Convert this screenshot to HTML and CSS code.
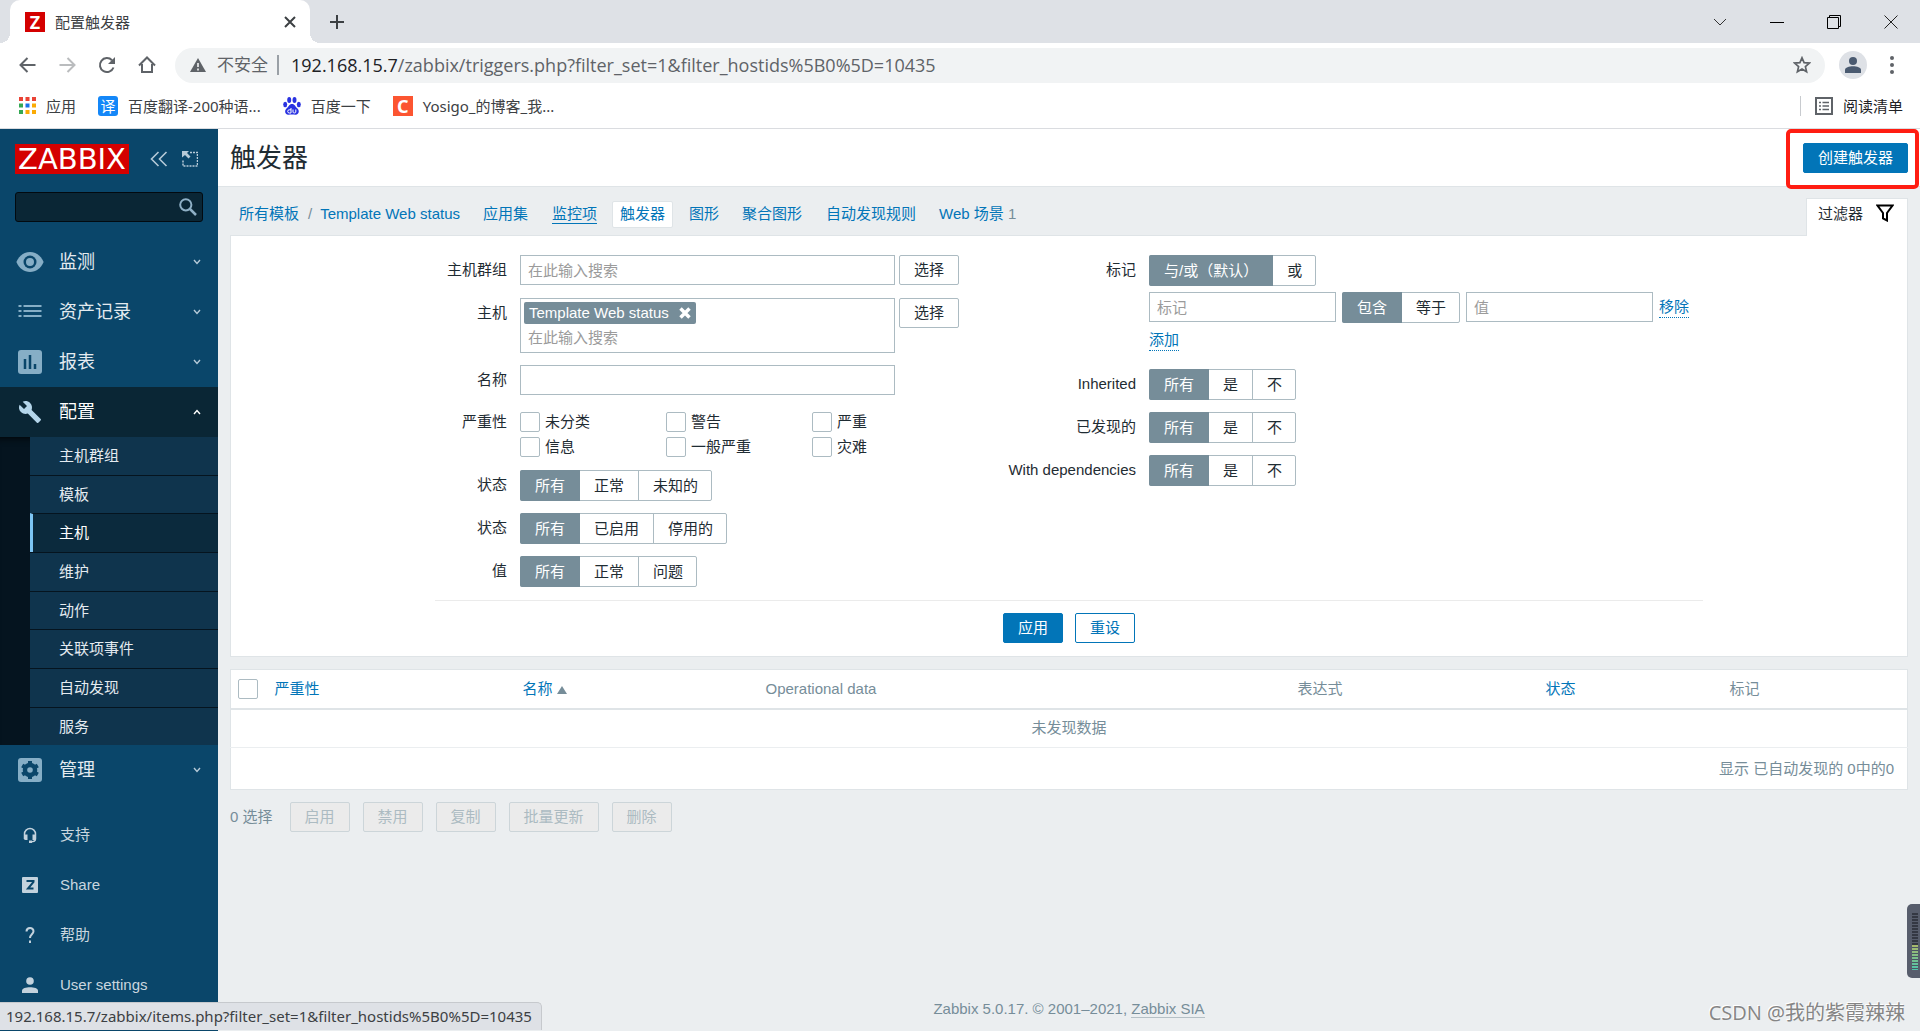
FILE: index.html
```html
<!DOCTYPE html>
<html lang="zh-CN">
<head>
<meta charset="utf-8">
<title>配置触发器</title>
<link rel="stylesheet" href="styles.css">
</head>
<body>
<div class="browser">
  <div class="tabstrip">
    <div class="tab">
      <span class="favicon favicon-zabbix">Z</span>
      <span class="tab-title">配置触发器</span>
      <button class="icon-btn" aria-label="关闭标签页"><svg width="12" height="12" viewBox="0 0 12 12"><path d="M1 1l10 10M11 1L1 11" stroke="#3c4043" stroke-width="2"/></svg></button>
    </div>
    <button class="icon-btn new-tab" aria-label="新标签页"><svg width="16" height="16" viewBox="0 0 16 16"><path d="M8 1v14M1 8h14" stroke="#3c4043" stroke-width="2"/></svg></button>
    <div class="window-controls">
      <button class="icon-btn" aria-label="搜索标签页"><svg width="14" height="8" viewBox="0 0 14 8"><path d="M1 1l6 6 6-6" fill="none" stroke="#333"/></svg></button>
      <button class="icon-btn" aria-label="最小化"><svg width="14" height="14" viewBox="0 0 14 14"><path d="M0 7.500h14" stroke="#000"/></svg></button>
      <button class="icon-btn" aria-label="还原"><svg width="14" height="14" viewBox="0 0 14 14"><path d="M.5 2.500h11v11H.5zM2.500 2V.5h11v11H12" fill="none" stroke="#000"/></svg></button>
      <button class="icon-btn" aria-label="关闭"><svg width="14" height="14" viewBox="0 0 14 14"><path d="M.5.5l13 13M13.500.5l-13 13" stroke="#222"/></svg></button>
    </div>
  </div>
  <div class="toolbar">
    <div class="nav-buttons">
      <button class="icon-btn" aria-label="后退"><svg width="17" height="16" viewBox="0 0 17 16"><path d="M16.500 8H2M8.500 1L1.500 8l7 7" fill="none" stroke="#5f6368" stroke-width="2"/></svg></button>
      <button class="icon-btn" aria-label="前进"><svg width="17" height="16" viewBox="0 0 17 16"><path d="M.5 8H15M8.500 1l7 7-7 7" fill="none" stroke="#babcbe" stroke-width="2"/></svg></button>
      <button class="icon-btn" aria-label="刷新"><svg width="18" height="18" viewBox="0 0 18 18"><path d="M15.500 11.500A7 7 0 1 1 14 4.200" fill="none" stroke="#5f6368" stroke-width="2"/><path d="M17 1v7h-7z" fill="#5f6368"/></svg></button>
      <button class="icon-btn" aria-label="主页"><svg width="18" height="18" viewBox="0 0 18 18"><path d="M4 8v8h10V8M1 9.500L9 1.500l8 8" fill="none" stroke="#5f6368" stroke-width="2"/></svg></button>
    </div>
    <div class="omnibox">
      <svg width="16" height="14" viewBox="0 0 16 14"><path d="M8 0l8 14H0z" fill="#5f6368"/><path d="M8 5v4M8 10.500v2" stroke="#fff" stroke-width="1.500"/></svg>
      <span class="insecure">不安全</span>
      <span class="url"><b>192.168.15.7</b>/zabbix/triggers.php?filter_set=1&amp;filter_hostids%5B0%5D=10435</span>
      <button class="icon-btn star" aria-label="收藏"><svg width="18" height="18" viewBox="0 0 18 18"><path d="M9 1.800l2.100 4.900 5.300.4-4 3.500 1.200 5.200L9 13l-4.600 2.800 1.200-5.200-4-3.500 5.300-.4z" fill="none" stroke="#5f6368" stroke-width="1.700"/></svg></button>
    </div>
    <button class="icon-btn avatar" aria-label="用户"><svg width="16" height="16" viewBox="0 0 16 16" fill="#4a5a70"><circle cx="8" cy="4" r="4"/><path d="M0 16v-3c0-5 16-5 16 0v3z"/></svg></button>
    <button class="icon-btn kebab" aria-label="菜单"><svg width="4" height="18" viewBox="0 0 4 18" fill="#5f6368"><circle cx="2" cy="2" r="2"/><circle cx="2" cy="9" r="2"/><circle cx="2" cy="16" r="2"/></svg></button>
  </div>
  <div class="bookmarks">
    <a href="#" class="bookmark"><svg width="17" height="17" viewBox="0 0 17 17"><path d="M0 0h4v4H0zM6.500 0h4v4h-4zM13 0h4v4h-4z" fill="#ea4335"/><path d="M0 6.500h4v4H0zM0 13h4v4H0z" fill="#34a853"/><path d="M6.500 6.500h4v4h-4z" fill="#1a73e8"/><path d="M13 6.500h4v4h-4zM6.500 13h4v4h-4zM13 13h4v4h-4z" fill="#fbab04"/></svg>应用</a>
    <a href="#" class="bookmark"><span class="favicon favicon-fanyi">译</span>百度翻译-200种语...</a>
    <a href="#" class="bookmark"><svg width="18" height="18" viewBox="0 0 18 18" fill="#2932e1"><ellipse cx="6.200" cy="3" rx="2" ry="2.900"/><ellipse cx="11.500" cy="3" rx="2" ry="2.900"/><ellipse cx="2.200" cy="7.500" rx="2" ry="2.700"/><ellipse cx="15.800" cy="7.500" rx="2" ry="2.700"/><path d="M9 7c3 0 3 2.500 5.500 4.500 2.500 2.300 1 6.500-2 6.200-2.300-.4-4.700-.4-7 0-3.300.3-4.500-4-2-6.200C6 9.500 6 7 9 7z"/><path d="M8 11v5H6.300a1.300 1.300 0 0 1 0-3.200H8M10 12.500v2.700c0 1 2.800 1 2.800 0v-2.700" fill="none" stroke="#fff"/></svg>百度一下</a>
    <a href="#" class="bookmark"><span class="favicon favicon-csdn">C</span>Yosigo_的博客_我...</a>
    <a href="#" class="bookmark reading"><svg width="18" height="18" viewBox="0 0 18 18"><path d="M1 1h16v16H1z" fill="none" stroke="#5f6368" stroke-width="2"/><path d="M4 5.500h2M4 9h2M4 12.500h2M7.500 5.500H14M7.500 9H14M7.500 12.500H14" stroke="#5f6368" stroke-width="1.500"/></svg>阅读清单</a>
  </div>
</div>

<div class="app">
  <aside class="sidebar">
    <div class="brand">
      <a href="#" class="logo">ZABBIX</a>
      <button class="icon-btn" aria-label="收起"><svg width="18" height="16" viewBox="0 0 18 16"><path d="M8.500 1l-7 7 7 7M16.500 1l-7 7 7 7" fill="none" stroke="#b6cad8" stroke-width="1.600"/></svg></button>
      <button class="icon-btn" aria-label="隐藏"><svg width="16" height="16" viewBox="0 0 16 16"><path d="M8 1.500h7.500v13.500H1V9" fill="none" stroke="#b6cad8" stroke-width="1.500" stroke-dasharray="2 1"/><path d="M0 0h7L5 2l3.500 3.500-2 2L3 4 0 6.500z" fill="#b6cad8"/></svg></button>
    </div>
    <form class="side-search">
      <input type="search" aria-label="搜索">
      <button type="button" class="icon-btn" aria-label="搜索"><svg width="18" height="18" viewBox="0 0 18 18"><circle cx="6.800" cy="6.800" r="5.600" fill="none" stroke="#8fb0c6" stroke-width="2"/><path d="M11 11l6 6" stroke="#8fb0c6" stroke-width="2.500"/></svg></button>
    </form>
    <nav class="menu">
      <a href="#" class="menu-item"><svg width="28" height="20" viewBox="0 0 28 20"><path d="M14 0c6 0 11 3.800 13.600 10C25 16.200 20 20 14 20S3 16.200.4 10C3 3.800 8 0 14 0z" fill="#86aec6"/><circle cx="14" cy="10" r="6.500" fill="#0a466a"/><circle cx="14" cy="10" r="4" fill="#86aec6"/></svg><span>监测</span><svg class="chev" width="8" height="6" viewBox="0 0 8 6"><path d="M1 1l3 3.500L7 1" fill="none" stroke="#b6cad8" stroke-width="1.400"/></svg></a>
      <a href="#" class="menu-item"><svg width="28" height="20" viewBox="0 0 28 20"><path d="M2.500 4h3M2.500 9h3M2.500 14h3M7.500 4h18M7.500 9h18M7.500 14h18" stroke="#86aec6" stroke-width="2.200"/></svg><span>资产记录</span><svg class="chev" width="8" height="6" viewBox="0 0 8 6"><path d="M1 1l3 3.500L7 1" fill="none" stroke="#b6cad8" stroke-width="1.400"/></svg></a>
      <a href="#" class="menu-item"><svg width="28" height="24" viewBox="0 0 28 24"><rect x="2" y="0" width="24" height="24" rx="3" fill="#86aec6"/><path d="M9 9v10M14 5v14M19 14v5" stroke="#0a466a" stroke-width="2.500"/></svg><span>报表</span><svg class="chev" width="8" height="6" viewBox="0 0 8 6"><path d="M1 1l3 3.500L7 1" fill="none" stroke="#b6cad8" stroke-width="1.400"/></svg></a>
      <a href="#" class="menu-item open"><svg width="28" height="24" viewBox="1 0 26 24"><path transform="translate(2 0)" fill="#b4d5ea" d="M22.700 19l-9.100-9.100c.9-2.300.4-5-1.500-6.900-2-2-5-2.400-7.400-1.300L9 6 6 9 1.600 4.700C.4 7.100.9 10.100 2.900 12.100c1.900 1.900 4.600 2.400 6.900 1.500l9.100 9.100c.4.400 1 .4 1.400 0l2.300-2.300c.5-.4.5-1.100.1-1.400z"/></svg><span>配置</span><svg class="chev" width="8" height="6" viewBox="0 0 8 6"><path d="M1 5l3-3.500L7 5" fill="none" stroke="#fff" stroke-width="1.400"/></svg></a>
      <div class="submenu">
        <a href="#">主机群组</a>
        <a href="#">模板</a>
        <a href="#" class="active">主机</a>
        <a href="#">维护</a>
        <a href="#">动作</a>
        <a href="#">关联项事件</a>
        <a href="#">自动发现</a>
        <a href="#">服务</a>
      </div>
      <a href="#" class="menu-item"><svg width="28" height="24" viewBox="0 0 28 24"><rect x="2" y="0" width="24" height="24" rx="3" fill="#86aec6"/><circle cx="14" cy="12" r="5" fill="none" stroke="#0a466a" stroke-width="4.500"/><path d="M14 3v18M6.200 7.500l15.600 9M21.800 7.500l-15.600 9" stroke="#0a466a" stroke-width="4"/><circle cx="14" cy="12" r="2.800" fill="#86aec6"/></svg><span>管理</span><svg class="chev" width="8" height="6" viewBox="0 0 8 6"><path d="M1 1l3 3.500L7 1" fill="none" stroke="#b6cad8" stroke-width="1.400"/></svg></a>
    </nav>
    <nav class="user-menu">
      <a href="#"><svg width="16" height="16" viewBox="0 0 16 16"><path d="M2.500 12V7a5.500 5.500 0 0 1 11 0v5c0 2-2 2.800-5 2.800" fill="none" stroke="#c3d2dd" stroke-width="1.500"/><path d="M2 7.500h3.500V13H3.500C2 13 2 12 2 11zM14 7.500h-3.500V13H14zM7 13.500h3V16H7z" fill="#c3d2dd"/></svg>支持</a>
      <a href="#"><svg width="16" height="16" viewBox="0 0 16 16"><rect width="16" height="16" rx="1" fill="#c3d2dd"/><path d="M4.500 4h7v1L6 11.500h5.500" fill="none" stroke="#0a466a" stroke-width="2"/></svg>Share</a>
      <a href="#"><svg width="16" height="16" viewBox="0 0 16 16"><path d="M4.500 4.500C4.500 0 11.500 0 11.500 4.200 11.500 7 8 7.500 8 11M8 13.500V16" fill="none" stroke="#c3d2dd" stroke-width="2"/></svg>帮助</a>
      <a href="#"><svg width="16" height="16" viewBox="0 0 16 16" fill="#c3d2dd"><circle cx="8" cy="4" r="3.800"/><path d="M0 16v-2.500c0-4.500 16-4.500 16 0V16z"/></svg>User settings</a>
    </nav>
  </aside>

  <main class="content">
    <header class="page-head">
      <h1>触发器</h1>
      <button class="btn primary">创建触发器</button>
    </header>
    <div class="page-nav">
      <nav class="crumbs">
        <a href="#">所有模板</a><span class="sep">/</span><a href="#">Template Web status</a>
        <a href="#" class="nav-link">应用集</a>
        <a href="#" class="nav-link"><span class="hovered">监控项</span></a>
        <a href="#" class="nav-link selected">触发器</a>
        <a href="#" class="nav-link">图形</a>
        <a href="#" class="nav-link">聚合图形</a>
        <a href="#" class="nav-link">自动发现规则</a>
        <a href="#" class="nav-link">Web 场景 <small>1</small></a>
      </nav>
      <a href="#" class="filter-tab">过滤器<svg width="18" height="18" viewBox="0 0 18 18"><path d="M1.500 1.500h15L11 9v7.500L7 14.500V9z" fill="none" stroke="#000" stroke-width="2"/></svg></a>
    </div>

    <form class="filter">
      <div class="filter-cols">
        <div class="fields">
          <label for="groups">主机群组</label>
          <div class="row"><input id="groups" class="text wide" placeholder="在此输入搜索"><button type="button" class="btn plain">选择</button></div>
          <label for="hosts">主机</label>
          <div class="row"><div class="multi wide"><span class="chip">Template Web status<button type="button" class="icon-btn" aria-label="移除"><svg width="12" height="12" viewBox="0 0 12 12"><path d="M1.500 1.500l9 9M10.500 1.500l-9 9" stroke="#fff" stroke-width="3.500"/></svg></button></span><input id="hosts" placeholder="在此输入搜索"></div><button type="button" class="btn plain">选择</button></div>
          <label for="name">名称</label>
          <div class="row"><input id="name" class="text wide"></div>
          <span class="label check-label">严重性</span>
          <div class="checks">
            <label><input type="checkbox">未分类</label><label><input type="checkbox">警告</label><label><input type="checkbox">严重</label>
            <label><input type="checkbox">信息</label><label><input type="checkbox">一般严重</label><label><input type="checkbox">灾难</label>
          </div>
          <span class="label">状态</span>
          <div class="seg"><label><input type="radio" name="state" checked>所有</label><label><input type="radio" name="state">正常</label><label><input type="radio" name="state">未知的</label></div>
          <span class="label">状态</span>
          <div class="seg"><label><input type="radio" name="status" checked>所有</label><label><input type="radio" name="status">已启用</label><label><input type="radio" name="status">停用的</label></div>
          <span class="label">值</span>
          <div class="seg"><label><input type="radio" name="value" checked>所有</label><label><input type="radio" name="value">正常</label><label><input type="radio" name="value">问题</label></div>
        </div>
        <div class="fields">
          <span class="label">标记</span>
          <div class="tags">
            <div class="seg"><label><input type="radio" name="evaltype" checked>与/或（默认）</label><label><input type="radio" name="evaltype">或</label></div>
            <div class="tag-row">
              <input class="text tag" placeholder="标记" aria-label="标记">
              <div class="seg"><label><input type="radio" name="op" checked>包含</label><label><input type="radio" name="op">等于</label></div>
              <input class="text tag" placeholder="值" aria-label="值">
              <button type="button" class="dotted">移除</button>
            </div>
            <button type="button" class="dotted">添加</button>
          </div>
          <span class="label">Inherited</span>
          <div class="seg"><label><input type="radio" name="inherited" checked>所有</label><label><input type="radio" name="inherited">是</label><label><input type="radio" name="inherited">不</label></div>
          <span class="label">已发现的</span>
          <div class="seg"><label><input type="radio" name="discovered" checked>所有</label><label><input type="radio" name="discovered">是</label><label><input type="radio" name="discovered">不</label></div>
          <span class="label">With dependencies</span>
          <div class="seg"><label><input type="radio" name="deps" checked>所有</label><label><input type="radio" name="deps">是</label><label><input type="radio" name="deps">不</label></div>
        </div>
      </div>
      <div class="filter-actions"><button type="button" class="btn primary">应用</button><button type="button" class="btn outline">重设</button></div>
    </form>

    <table class="list">
      <colgroup><col class="c-check"><col class="c-sev"><col class="c-name"><col class="c-data"><col class="c-expr"><col class="c-stat"><col></colgroup>
      <thead><tr><th><input type="checkbox" aria-label="全选"></th><th><a href="#">严重性</a></th><th><a href="#">名称 <i class="asc"></i></a></th><th>Operational data</th><th>表达式</th><th><a href="#">状态</a></th><th>标记</th></tr></thead>
      <tbody><tr><td colspan="7" class="empty">未发现数据</td></tr></tbody>
      <tfoot><tr><td colspan="7" class="count">显示 已自动发现的 0中的0</td></tr></tfoot>
    </table>
    <div class="bulk">
      <span>0 选择</span>
      <button class="btn" disabled>启用</button><button class="btn" disabled>禁用</button><button class="btn" disabled>复制</button><button class="btn" disabled>批量更新</button><button class="btn" disabled>删除</button>
    </div>
    <footer class="foot">Zabbix 5.0.17. © 2001–2021, <a href="#">Zabbix SIA</a></footer>
  </main>
</div>

<div class="highlight"></div>
<div class="meter"><i></i><b></b></div>
<div class="watermark">CSDN @我的紫霞辣辣</div>
<div class="status-url">192.168.15.7/zabbix/items.php?filter_set=1&amp;filter_hostids%5B0%5D=10435</div>
</body>
</html>
```

FILE: styles.css
```css
* { box-sizing: border-box; }
html, body { height: 100%; }
body {
  margin: 0;
  display: flex;
  flex-direction: column;
  overflow: hidden;
  background: #ebeef0;
  color: #1f2c33;
  font: 15px/20px "Liberation Sans", Arial, "Noto Sans CJK SC", sans-serif;
}
a { color: #0275b8; text-decoration: none; }
button, input { font: inherit; color: inherit; }
svg { flex: none; display: block; }
.icon-btn { display: flex; align-items: center; justify-content: center; padding: 0; border: 0; background: none; }

/* Browser frame */
.browser { flex: none; background: #fff; border-bottom: 1px solid #dadce0; color: #3c4043; font-family: "Noto Sans", "Noto Sans CJK SC", sans-serif; }
.tabstrip { display: flex; align-items: center; height: 43px; padding-left: 10px; background: #dee1e6; }
.tab { position: relative; display: flex; align-items: center; width: 300px; height: 43px; padding: 0 14px 8px 15px; border-radius: 10px 10px 0 0; background: #fff; }
.tab::before, .tab::after { content: ""; position: absolute; bottom: 0; width: 10px; height: 10px; }
.tab::before { right: 100%; background: radial-gradient(circle at 0 0, #dee1e6 10px, #fff 10px); }
.tab::after { left: 100%; background: radial-gradient(circle at 100% 0, #dee1e6 10px, #fff 10px); }
.tab { padding-bottom: 0; }
.tab-title { flex: 1; margin-left: 10px; }
.favicon { display: flex; align-items: center; justify-content: center; width: 20px; height: 20px; color: #fff; }
.favicon-zabbix { background: #d40000; font-weight: 700; font-size: 18px; }
.favicon-fanyi { border-radius: 3px; background: #1487f8; font-size: 15px; }
.favicon-csdn { background: #fc5531; font-size: 18px; font-weight: 700; }
.new-tab { margin-left: 19px; }
.window-controls { display: flex; margin-left: auto; padding-right: 1px; }
.window-controls .icon-btn { width: 57px; height: 37px; }
.toolbar { display: flex; align-items: center; height: 44px; padding: 0 10px 0 7px; }
.nav-buttons { display: flex; width: 168px; }
.nav-buttons .icon-btn { width: 40px; height: 36px; }
.omnibox { flex: 1; display: flex; align-items: center; height: 35px; padding: 0 14px 0 15px; border-radius: 18px; background: #f1f3f4; font-size: 17px; color: #5f6368; }
.insecure { margin: 0 12px 0 11px; padding-right: 9px; border-right: 2px solid #9aa0a6; }
.url { font: 18px/24px "Open Sans", sans-serif; }
.url b { color: #202124; font-weight: 400; }
.star { margin-left: auto; }
.avatar { width: 28px; height: 28px; margin-left: 14px; border-radius: 50%; background: #dee1e6; }
.kebab { width: 20px; margin: 0 8px 0 15px; }
.bookmarks { display: flex; align-items: center; gap: 22px; height: 41px; padding: 0 17px 4px 19px; }
.bookmark { display: flex; align-items: center; gap: 10px; color: #3c4043; }
.reading { margin-left: auto; padding-left: 14px; border-left: 1px solid #c8cbcf; color: #202124; }

/* Sidebar */
.app { flex: 1; display: flex; min-height: 0; }
.sidebar { flex: none; width: 218px; background: #0a466a; }
.brand { display: flex; align-items: center; gap: 14px; padding: 15px 15px 0; }
.logo { width: 114px; height: 30px; margin-right: 7px; background: #d40000; color: #fff; font: 29px/30px "DejaVu Sans", sans-serif; text-align: center; }
.side-search { display: flex; height: 30px; margin: 18px 15px 15px; padding-right: 5px; border: 1px solid #020a10; border-radius: 3px; background: #0a2635; }
.side-search input { flex: 1; min-width: 0; border: 0; background: none; color: #fff; }
.menu-item { display: flex; align-items: center; height: 50px; padding: 0 17px 0 16px; color: #e4ebf0; font-size: 18px; }
.menu-item span { flex: 1; margin-left: 15px; }
.menu-item.open { background: #0a2635; color: #fff; }
.submenu { padding-left: 30px; background: #05141f; box-shadow: inset 0 8px 8px -8px #000; }
.submenu a { display: block; height: 39px; padding-left: 29px; border-top: 1px solid #05141f; background: #0f344d; color: #e4ebf0; line-height: 37px; }
.submenu a:first-child, .submenu a:nth-child(2), .submenu a:nth-child(5), .submenu a:last-child { height: 38px; }
.submenu a:first-child { border-top: 0; }
.submenu .active { padding-left: 26px; border-left: 3px solid #7dc6f5; background: #0b2a3d; color: #fff; }
.user-menu { padding-top: 15px; }
.user-menu a { display: flex; align-items: center; gap: 22px; height: 50px; padding-left: 22px; color: #c9d6df; }

/* Content */
.content { flex: 1; display: flex; flex-direction: column; min-width: 0; padding-bottom: 12px; }
.page-head { display: flex; align-items: center; justify-content: space-between; height: 58px; padding: 0 12px; border-bottom: 1px solid #dfe4e7; background: #fff; }
.page-head h1 { margin: 0; font-size: 26px; font-weight: 400; line-height: 32px; }
.btn { height: 30px; padding: 0 14px; border: 1px solid #0275b8; border-radius: 2px; white-space: nowrap; line-height: 20px; }
.btn.primary { background: #0275b8; color: #fff; }
.btn.outline { background: #fff; color: #0275b8; }
.btn.plain { border-color: #acbbc2; background: #fff; color: #1f2c33; }
.btn:disabled { border-color: #ccd5d9; background: #ebebeb; color: #acbbc2; }
.page-nav { display: flex; justify-content: space-between; padding: 11px 12px 0; }
.crumbs { display: flex; align-items: center; height: 32px; padding-left: 9px; }
.sep { margin: 0 8px 0 9px; color: #768d99; }
.nav-link { height: 27px; padding: 0 8px; line-height: 26px; }
.sep + a + .nav-link { margin-left: 15px; }
.nav-link + .nav-link { margin-left: 7px; }
.nav-link.selected { padding: 0 7px; border: 1px solid #dfe4e7; border-radius: 2px; background: #fff; line-height: 24px; }
.nav-link:nth-of-type(even) { margin-left: 8px; }
.nav-link small { color: #768d99; font-size: 15px; }
.hovered { display: inline-block; height: 23px; border-bottom: 1px solid #0275b8; }
.filter-tab { display: flex; gap: 13px; height: 38px; margin-bottom: -1px; padding: 5px 13px 0 11px; border: 1px solid #dfe4e7; border-bottom: 0; background: #fff; color: #1f2c33; z-index: 1; }
.filter { margin: 0 12px; padding-top: 19px; border: 1px solid #dfe4e7; background: #fff; }
.filter-cols { display: grid; grid-template-columns: 1fr 1fr; width: 1268px; max-width: 100%; margin: 0 auto; padding-bottom: 13px; border-bottom: 1px solid #ebebeb; }
.fields { display: grid; grid-template-columns: 72px 1fr; gap: 12px 13px; align-content: start; justify-items: start; }
.fields + .fields { grid-template-columns: 67px 1fr; }
.fields > label, .fields > .label { justify-self: end; padding-top: 5px; white-space: nowrap; }
.row { display: flex; align-items: flex-start; gap: 4px; }
.row:first-of-type { height: 31px; }
.text { height: 30px; padding: 0 7px; border: 1px solid #acbbc2; background: #fff; outline: 0; }
.wide { width: 375px; }
::placeholder { color: #9b9b9b; opacity: 1; }
.multi { display: flex; flex-direction: column; align-items: flex-start; height: 55px; padding: 3px; border: 1px solid #acbbc2; }
.multi input { width: 100%; height: 24px; margin-top: 1px; padding: 0 4px; border: 0; outline: 0; }
.chip { display: flex; align-items: center; gap: 10px; height: 22px; padding: 0 5px; border-radius: 2px; background: #768d99; color: #fff; }
.checks { display: grid; grid-template-columns: repeat(3, 146px); gap: 5px 0; padding: 5px 0 1px; }
.checks label { display: flex; align-items: center; gap: 5px; height: 20px; }
input[type="checkbox"] { appearance: none; width: 20px; height: 20px; margin: 0; border: 1px solid #acbbc2; border-radius: 2px; background: #fff; }
.seg { display: flex; height: 31px; border: 1px solid #acbbc2; border-radius: 2px; }
.seg label { padding: 0 14px; border-left: 1px solid #acbbc2; line-height: 29px; white-space: nowrap; }
.seg label:last-child { padding-right: 13px; }
.seg label:has(:checked) { margin: -1px 0 -1px -1px; padding: 1px 15px; border-left: 0; background: #768d99; color: #fff; border-radius: 2px 0 0 2px; }
.seg label:has(:checked) + label { border-left: 0; }
.seg input { position: absolute; opacity: 0; pointer-events: none; }
.tags { display: flex; flex-direction: column; align-items: flex-start; height: 102px; gap: 6px; }
.tag-row { display: flex; gap: 6px; }
.tag { width: 187px; }
.dotted { align-self: flex-start; height: 22px; padding: 0; border: 0; border-bottom: 1px dotted #0275b8; background: none; color: #0275b8; line-height: 20px; }
.tag-row .dotted { margin-top: 4px; }
.filter-actions { display: flex; justify-content: center; gap: 12px; padding: 12px 0 13px; }

.list { table-layout: fixed; margin: 12px 12px 0; border-collapse: collapse; border: 1px solid #dfe4e7; background: #fff; width: calc(100% - 24px); color: #768d99; }
.list th { height: 39px; padding: 0 6px; border-bottom: 2px solid #dfe4e7; font-weight: 400; text-align: left; }
.list th:first-child { padding-left: 7px; }
.list th input { display: block; }
.list td { height: 39px; padding: 0 13px; }
.list tfoot td { height: 42px; border-top: 1px solid #ebeef0; }
.c-check { width: 38px; }
.c-sev { width: 248px; }
.c-name { width: 243px; }
.c-data { width: 532px; }
.c-expr { width: 248px; }
.c-stat { width: 184px; }
.asc { display: inline-block; border: 5px solid transparent; border-top: 0; border-bottom: 8px solid #768d99; }
.list .empty { text-align: center; }
.list .count { text-align: right; }
.bulk { display: flex; align-items: center; gap: 13px; padding: 12px; color: #768d99; }
.bulk span { margin-right: 4px; }
.foot { margin-top: auto; color: #768d99; text-align: center; }
.foot a { color: #768d99; border-bottom: 1px solid #b5c0c6; }

/* Overlays */
.highlight { position: absolute; top: 129px; right: 1px; width: 133px; height: 60px; border: 4px solid #ff1d12; border-radius: 5px; pointer-events: none; }
.meter { position: absolute; right: 0; bottom: 53px; width: 13px; height: 74px; padding: 9px 2px 9px 5px; border-radius: 5px 0 0 5px; background: #575d6c; }
.meter i, .meter b { display: block; height: 32px; background: repeating-linear-gradient(#343843 0 2px, #575d6c 2px 3px); }
.meter b { height: 25px; background: repeating-linear-gradient(transparent 0 2px, #4b5562 2px 3px), linear-gradient(#a9b86b, #7cc08a, #4fc3ac); }
.watermark { position: absolute; right: 15px; bottom: 5px; color: #858585; font: 20px/26px "Open Sans", "Noto Sans CJK SC", sans-serif; text-shadow: -1px -1px #fff; }
.status-url { position: absolute; left: 0; bottom: 1px; height: 28px; padding: 0 9px 0 6px; border: 1px solid #c6c9cd; border-width: 1px 1px 0 0; border-radius: 0 5px 0 0; background: #dee1e6; color: #3c4043; font: 15px/27px "Noto Sans", sans-serif; }
```
